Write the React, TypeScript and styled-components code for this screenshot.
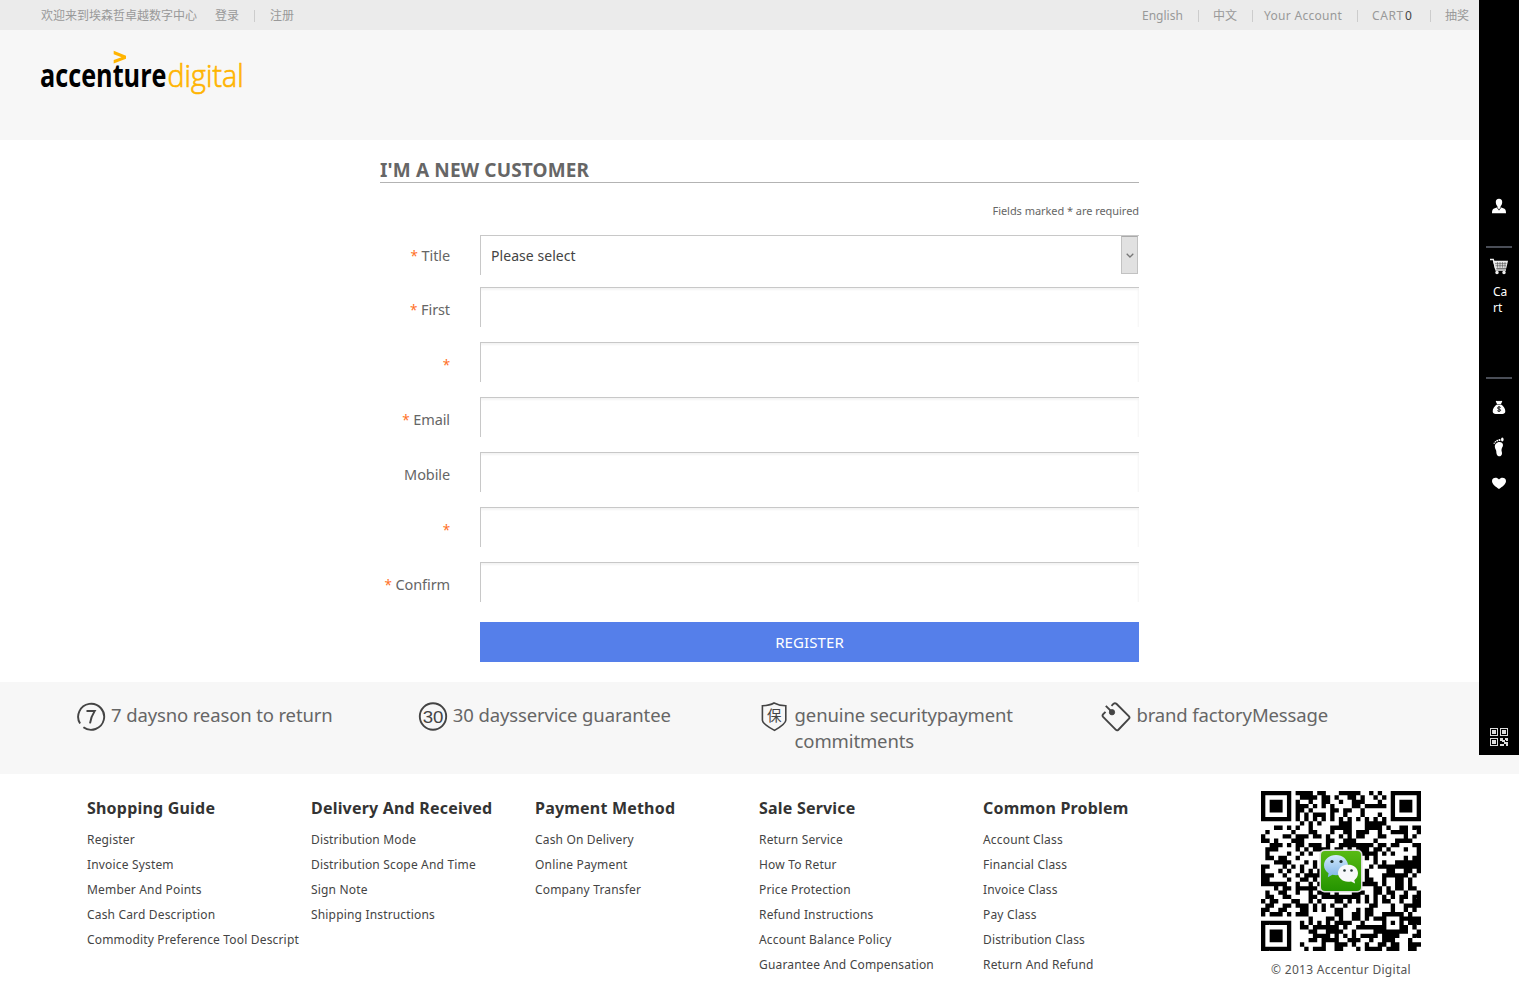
import React from 'react';
import styled, { createGlobalStyle } from 'styled-components';

const GlobalStyle = createGlobalStyle`
  * { box-sizing: border-box; }
  body {
    margin: 0;
    background: #fff;
    color: #666;
    font-family: "Noto Sans", "Noto Sans CJK SC", sans-serif;
    font-size: 12px;
  }
  h1, h2, ul, p { margin: 0; padding: 0; }
  ul { list-style: none; }
`;

const Page = styled.div`
  width: 1519px;
  height: 999px;
  overflow: hidden;
`;

const TopBar = styled.nav`
  display: flex;
  justify-content: space-between;
  height: 30px;
  padding: 0 50px 0 41px;
  background: #ebebeb;
  color: #999;
  line-height: 31px;
  white-space: nowrap;
`;

const Group = styled.div`
  display: flex;
`;

const TopLink = styled.span<{ $w: number; $ls?: number }>`
  width: ${(p) => p.$w}px;
  letter-spacing: ${(p) => p.$ls ?? 0}px;
`;

const Count = styled.span`
  width: 8px;
  color: #444;
`;

const Divider = styled.span<{ $l: number; $r: number }>`
  width: 1px;
  height: 12px;
  margin: 10px ${(p) => p.$r}px 0 ${(p) => p.$l}px;
  background: #cccccc;
`;

const Header = styled.header`
  height: 110px;
  padding: 12px 0 0 38px;
  background: #f7f7f7;
`;

const Form = styled.form`
  width: 759px;
  height: 542px;
  margin: 0 auto;
  padding-top: 17px;
`;

const FormTitle = styled.h1`
  height: 26px;
  border-bottom: 1px solid #b3b3b3;
  font-size: 19px;
  line-height: 27px;
  letter-spacing: 0.15px;
`;

const Note = styled.p`
  height: 52px;
  padding-top: 20px;
  text-align: right;
  font-size: 11px;
  line-height: 16px;
  letter-spacing: -0.05px;
`;

const Row = styled.div<{ $h?: number }>`
  display: flex;
  height: ${(p) => p.$h ?? 55}px;
`;

const Label = styled.label<{ $select?: boolean }>`
  width: 70px;
  margin-right: 30px;
  text-align: right;
  font-size: 14.5px;
  line-height: ${(p) => (p.$select ? 41 : 45)}px;
  letter-spacing: -0.1px;
`;

const Star = styled.span`
  color: #ff6f26;
  font-size: 13.5px;
`;

const Field = styled.div<{ $select?: boolean }>`
  display: flex;
  justify-content: space-between;
  width: 659px;
  height: 40px;
  padding-left: 10px;
  border-top: 1px solid #c8c8c8;
  border-left: 1px solid #c8c8c8;
  box-shadow: ${(p) => (p.$select ? 'none' : 'inset -1px 2px 2px #f4f4f4')};
  color: #444;
  font-size: 14px;
  line-height: 40px;
  letter-spacing: 0.05px;
`;

const Arrow = styled.span`
  display: flex;
  align-items: center;
  justify-content: center;
  width: 17px;
  height: 38px;
  margin-right: 1px;
  border: 1px solid #c2c2c2;
  border-top-color: #aaa;
  background: #e1e1e1;
`;

const Submit = styled.button`
  display: block;
  width: 659px;
  height: 40px;
  margin: 5px 0 0 100px;
  border: 0;
  background: #557fea;
  color: #fff;
  font-family: inherit;
  font-size: 15px;
  letter-spacing: 0.1px;
`;

const Services = styled.section`
  display: grid;
  grid-template-columns: repeat(4, 341.8px);
  height: 92px;
  padding: 20px 0 0 76px;
  background: #f7f7f7;
`;

const Service = styled.div`
  display: flex;
  gap: 5px;
  font-size: 18.5px;
  line-height: 26px;
  letter-spacing: -0.13px;
  svg { flex: none; }
  p { width: 250px; }
`;

const Footer = styled.footer`
  display: flex;
  padding: 17px 0 0 87px;
`;

const LinkColumn = styled.div`
  width: 224px;
  padding-top: 4px;
  white-space: nowrap;
`;

const ColumnTitle = styled.h2`
  color: #333;
  font-size: 16px;
  line-height: 26px;
  letter-spacing: 0.2px;
`;

const Links = styled.ul`
  padding-top: 6px;
  color: #444;
  font-size: 12px;
  line-height: 25px;
  letter-spacing: 0.17px;
`;

const CodeBlock = styled.div`
  width: 160px;
  margin-left: 54px;
  text-align: center;
  color: #555;
  line-height: 20px;
  letter-spacing: 0.28px;
  svg { display: block; margin-bottom: 9px; }
`;

const SidePanel = styled.aside`
  position: fixed;
  top: 0;
  right: 0;
  display: flex;
  flex-direction: column;
  align-items: center;
  width: 40px;
  height: 755px;
  padding-top: 198px;
  background: #000;
  color: #fff;
  svg { flex: none; }
`;

const Rule = styled.span<{ $t: number; $b: number }>`
  flex: none;
  width: 26px;
  height: 2px;
  margin: ${(p) => p.$t}px 0 ${(p) => p.$b}px;
  background: #4a4e57;
`;

const CartText = styled.span`
  width: 15px;
  height: 32px;
  margin: 9px 0 0 3px;
  font-size: 12px;
  line-height: 16px;
`;

const Gap = styled.span<{ $h: number }>`
  flex: none;
  height: ${(p) => p.$h}px;
`;

const Logo = () => (
  <svg width="220" height="64" viewBox="38 42 220 64">
    <path d="M113.700 50.800 126 55.700v3L113.700 63.500v-3.400l7.800-2.900-7.800-2.900z" fill="#ffb400" />
    <text x="40" y="87.400" fontFamily="Open Sans, Noto Sans, sans-serif" fontWeight="700" fontSize="32" fill="#000" textLength="126.500" lengthAdjust="spacingAndGlyphs">accenture</text>
    <text x="167.600" y="87.400" fontFamily="Open Sans, Noto Sans, sans-serif" fontWeight="300" fontSize="31.500" fill="#ffb400" stroke="#ffb400" strokeWidth=".7" textLength="76" lengthAdjust="spacingAndGlyphs">digital</text>
  </svg>
);

const SevenIcon = () => (
  <svg width="30" height="30" viewBox="0 0 30 30" fill="none" stroke="#444" strokeWidth="1.900">
    <path d="M4.100 21.600A13 13 0 1 1 7.400 25.200" />
    <path d="M10.500 9h8.200c-2.600 4-4 7.600-4.700 12.300" />
  </svg>
);

const ThirtyIcon = () => (
  <svg width="30" height="30" viewBox="0 0 30 30">
    <circle cx="15" cy="14.500" r="13.200" fill="none" stroke="#444" strokeWidth="1.900" />
    <text x="4.800" y="20.600" fontFamily="Liberation Sans, sans-serif" fontSize="17" fill="#444" textLength="20.500" lengthAdjust="spacingAndGlyphs">30</text>
  </svg>
);

const ShieldIcon = () => (
  <svg width="30" height="30" viewBox="0 0 30 30">
    <path d="M14 1c3.500 1.800 7 2.600 11.800 2.800v14.400c0 3.400-6.200 7.200-11.300 10.200C9 25.400 2.400 21.600 2.400 18.200V3.800C7 3.600 11 2.800 14 1z" fill="none" stroke="#444" strokeWidth="1.600" />
    <text x="7" y="18.800" fontFamily="Noto Sans CJK SC, sans-serif" fontSize="14.500" fill="#444">保</text>
  </svg>
);

const TagIcon = () => (
  <svg width="30" height="30" viewBox="0 0 30 30" fill="none" stroke="#444" strokeWidth="1.900">
    <path d="M10.500 3.800 12.600 1.700Q14 .6 15.400 1.800L28 14.300Q29 15.500 28 16.700L17.400 27.700Q16 29 14.700 27.700L2.100 14.900Q1 13.600 2 12.400L4.500 9.800" />
    <path d="M4.800 3.800 11 10" />
    <circle cx="11" cy="10.200" r="2.700" fill="#444" strokeWidth=".8" />
  </svg>
);

const SIZE = 37;

const finderCell = (x: number, y: number): boolean | null => {
  for (const [fx, fy] of [[0, 0], [30, 0], [0, 30]]) {
    const dx = x - fx;
    const dy = y - fy;
    if (dx >= -1 && dx <= 7 && dy >= -1 && dy <= 7) {
      const d = Math.max(Math.abs(dx - 3), Math.abs(dy - 3));
      return d === 3 || d < 2;
    }
  }
  const a = Math.max(Math.abs(x - 30), Math.abs(y - 30));
  if (a <= 2) return a !== 1;
  if (x === 6) return y % 2 === 0;
  if (y === 6) return x % 2 === 0;
  return null;
};

const codePath = (() => {
  let seed = 20131;
  let d = '';
  for (let y = 0; y < SIZE; y += 1) {
    for (let x = 0; x < SIZE; x += 1) {
      seed = (seed * 1103515245 + 12345) % 2147483648;
      const fixed = finderCell(x, y);
      if (fixed === null ? seed / 2147483648 < 0.51 : fixed) d += `M${x} ${y}h1v1h-1z`;
    }
  }
  return d;
})();

const QrCode = () => (
  <svg width="160" height="160" viewBox="0 0 160 160">
    <defs>
      <linearGradient id="badge" x2="0" y2="1">
        <stop stopColor="#58ba15" />
        <stop offset="1" stopColor="#249400" />
      </linearGradient>
      <linearGradient id="bubble" x2="0" y2="1">
        <stop stopColor="#d2e9fb" />
        <stop offset="1" stopColor="#7fb5e8" />
      </linearGradient>
    </defs>
    <path d={codePath} transform={`scale(${160 / SIZE})`} fill="#000" />
    <rect x="58.500" y="58.500" width="43" height="43" rx="5" fill="#dedede" />
    <rect x="60" y="60" width="40" height="40" rx="4" fill="url(#badge)" />
    <path d="M75 64c-7 0-12 4.600-12 10.300 0 3.400 1.800 6.200 4.600 8l-.8 4 4.600-2.500c1.200.3 2.300.5 3.600.5 6.600 0 12-4.600 12-10S81.600 64 75 64z" fill="url(#bubble)" />
    <path d="M87 73.500c-5.600 0-10 3.900-10 8.600s4.400 8.700 10 8.700c1.100 0 2.100-.2 3.100-.4l4 2.100-.8-3.300c2.200-1.500 3.700-4 3.700-7.100 0-4.700-4.400-8.600-10-8.600z" fill="#f7f8fa" />
    <g fill="#233">
      <circle cx="71" cy="70.500" r="1.600" /><circle cx="80" cy="70.500" r="1.600" />
      <circle cx="83.500" cy="79.500" r="1.300" /><circle cx="90.500" cy="79.500" r="1.300" />
    </g>
  </svg>
);

const PersonIcon = () => (
  <svg width="16" height="16" viewBox="0 0 16 16" fill="#fff">
    <path d="M8 .8c2.200 0 3.300 1.400 3.200 3.500-.1 1.800-.8 3.200-1.600 4v1.100L8 11.500 6.400 9.400V8.300C5.600 7.500 4.900 6.100 4.800 4.300 4.700 2.200 5.800.8 8 .8zM5.700 9.600 8 12.400l2.300-2.800 3.200 1.200c1.200.6 1.500 2.400 1.500 4.400H1c0-2 .3-3.800 1.500-4.400z" />
  </svg>
);

const CartIcon = () => (
  <svg width="20" height="17" viewBox="0 0 20 17" fill="none" stroke="#eee" strokeWidth="1.300">
    <path d="M1 1.500h3.300L7 12h10" />
    <path d="M4.800 3.500h13.400l-1.500 6.300H6.300z" fill="#ddd" />
    <path d="M6 5.600h11.500M6.500 7.700h10.700M8.500 4v5.700M11 4v5.700M13.500 4v5.700M16 4v5.700" stroke="#333" strokeWidth=".45" />
    <circle cx="8" cy="14.500" r="1.100" fill="#eee" /><circle cx="15" cy="14.500" r="1.100" fill="#eee" />
  </svg>
);

const MoneyIcon = () => (
  <svg width="14" height="15" viewBox="0 0 14 15">
    <path d="M3.700 1.300Q5 .2 6 1.300q1-.9 2 0 1-1.100 2.300 0L9 4H5zM5 4.600h4c2.500 1.500 4.300 4.200 4.300 6.700 0 2-1.300 2.700-3 2.700H3.700c-1.700 0-3-.7-3-2.700C.7 8.800 2.500 6.100 5 4.600z" fill="#fff" />
    <path d="M8.700 7.500C8.100 6.700 5.400 6.700 5.400 8c0 1.400 3.300.7 3.300 2.200 0 1.300-2.700 1.300-3.400.4M7 6v6" fill="none" stroke="#111" strokeWidth=".9" />
  </svg>
);

const FootIcon = () => (
  <svg width="12" height="20" viewBox="0 0 12 20" fill="#fff">
    <path d="M4.500 5.500C7 4.500 10 5.500 10 8c0 2-1.800 3.200-1.500 5.400.2 1.500.8 2.200.4 3.900-.4 1.600-1.900 2.400-3.300 1.900-2-.7-2.300-3-2.300-4.700 0-1.600-1.500-2.700-1.500-4.900 0-2 .9-3.400 2.700-4.100z" />
    <ellipse cx="9.300" cy="2.500" rx="1.300" ry="1.900" />
    <circle cx="6.500" cy="3" r="1.100" /><circle cx="4.200" cy="3.600" r=".9" /><circle cx="2.500" cy="4.700" r=".8" /><circle cx="1.200" cy="6.200" r=".7" />
  </svg>
);

const HeartIcon = () => (
  <svg width="14" height="13" viewBox="0 0 14 13">
    <path d="M7 12C4 10 0 7.300 0 4 0 .6 4.700-.4 7 2.400 9.300-.4 14 .6 14 4c0 3.300-4 6-7 8z" fill="#fff" />
  </svg>
);

const SmallCodeIcon = () => (
  <svg width="18" height="18" viewBox="0 0 18 18" fill="#ddd" shapeRendering="crispEdges">
    <path fillRule="evenodd" d="M0 0h8v8H0zM1 1v6h6V1zM10 0h8v8h-8zM11 1v6h6V1zM0 10h8v8H0zM1 11v6h6v-6z" />
    <path d="M2 2h4v4H2zM12 2h4v4h-4zM2 12h4v4H2zM10 10h3v2h2v2h-3v-1h-2zM15 10h3v3h-2v-1h-1zM10 16h4v2h-4zM14 14h4v4h-2v-2h-2z" />
  </svg>
);

const fields = [
  { label: 'First', required: true },
  { label: '', required: true },
  { label: 'Email', required: true },
  { label: 'Mobile', required: false },
  { label: '', required: true },
  { label: 'Confirm', required: true },
];

const services = [
  { icon: <SevenIcon />, text: '7 daysno reason to return' },
  { icon: <ThirtyIcon />, text: '30 daysservice guarantee' },
  { icon: <ShieldIcon />, text: 'genuine securitypayment commitments' },
  { icon: <TagIcon />, text: 'brand factoryMessage' },
];

const columns = [
  { title: 'Shopping Guide', links: ['Register', 'Invoice System', 'Member And Points', 'Cash Card Description', 'Commodity Preference Tool Descript'] },
  { title: 'Delivery And Received', links: ['Distribution Mode', 'Distribution Scope And Time', 'Sign Note', 'Shipping Instructions'] },
  { title: 'Payment Method', links: ['Cash On Delivery', 'Online Payment', 'Company Transfer'] },
  { title: 'Sale Service', links: ['Return Service', 'How To Retur', 'Price Protection', 'Refund Instructions', 'Account Balance Policy', 'Guarantee And Compensation'] },
  { title: 'Common Problem', links: ['Account Class', 'Financial Class', 'Invoice Class', 'Pay Class', 'Distribution Class', 'Return And Refund'] },
];

export default function App() {
  return (
    <Page>
      <GlobalStyle />
      <TopBar>
        <Group>
          <TopLink $w={174}>欢迎来到埃森哲卓越数字中心</TopLink>
          <TopLink $w={24}>登录</TopLink>
          <Divider $l={15} $r={15} />
          <TopLink $w={24}>注册</TopLink>
        </Group>
        <Group>
          <TopLink $w={41}>English</TopLink>
          <Divider $l={15} $r={14} />
          <TopLink $w={24}>中文</TopLink>
          <Divider $l={15} $r={11} />
          <TopLink $w={79} $ls={0.3}>Your Account</TopLink>
          <Divider $l={14} $r={14} />
          <TopLink $w={33} $ls={0.6}>CART</TopLink>
          <Count>0</Count>
          <Divider $l={17} $r={14} />
          <TopLink $w={24}>抽奖</TopLink>
        </Group>
      </TopBar>
      <Header><Logo /></Header>
      <Form>
        <FormTitle>I'M A NEW CUSTOMER</FormTitle>
        <Note>Fields marked * are required</Note>
        <Row $h={52}>
          <Label $select><Star>*</Star> Title</Label>
          <Field $select>
            Please select
            <Arrow>
              <svg width="8" height="5" viewBox="0 0 8 5" fill="none" stroke="#777" strokeWidth="1.300"><path d="M.7.7 4 4 7.300.7" /></svg>
            </Arrow>
          </Field>
        </Row>
        {fields.map((f, i) => (
          <Row key={i}>
            <Label>{f.required && <Star>*</Star>} {f.label}</Label>
            <Field />
          </Row>
        ))}
        <Submit type="button">REGISTER</Submit>
      </Form>
      <Services>
        {services.map((s) => (
          <Service key={s.text}>{s.icon}<p>{s.text}</p></Service>
        ))}
      </Services>
      <Footer>
        {columns.map((c) => (
          <LinkColumn key={c.title}>
            <ColumnTitle>{c.title}</ColumnTitle>
            <Links>{c.links.map((l) => <li key={l}>{l}</li>)}</Links>
          </LinkColumn>
        ))}
        <CodeBlock><QrCode />© 2013 Accentur Digital</CodeBlock>
      </Footer>
      <SidePanel>
        <PersonIcon />
        <Rule $t={32} $b={10} />
        <CartIcon />
        <CartText>Ca<br />rt</CartText>
        <Rule $t={61} $b={21} />
        <MoneyIcon />
        <Gap $h={22} />
        <FootIcon />
        <Gap $h={20} />
        <HeartIcon />
        <Gap $h={238} />
        <SmallCodeIcon />
      </SidePanel>
    </Page>
  );
}
